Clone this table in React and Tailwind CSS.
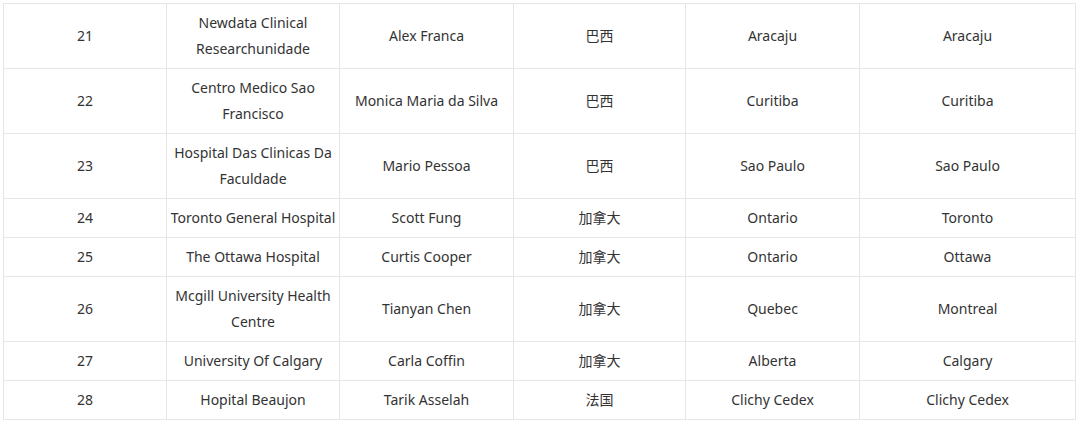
import React from "react";

const rows = [
  ["21", "Newdata Clinical Researchunidade", "Alex Franca", "巴西", "Aracaju", "Aracaju"],
  ["22", "Centro Medico Sao Francisco", "Monica Maria da Silva", "巴西", "Curitiba", "Curitiba"],
  ["23", "Hospital Das Clinicas Da Faculdade", "Mario Pessoa", "巴西", "Sao Paulo", "Sao Paulo"],
  ["24", "Toronto General Hospital", "Scott Fung", "加拿大", "Ontario", "Toronto"],
  ["25", "The Ottawa Hospital", "Curtis Cooper", "加拿大", "Ontario", "Ottawa"],
  ["26", "Mcgill University Health Centre", "Tianyan Chen", "加拿大", "Quebec", "Montreal"],
  ["27", "University Of Calgary", "Carla Coffin", "加拿大", "Alberta", "Calgary"],
  ["28", "Hopital Beaujon", "Tarik Asselah", "法国", "Clichy Cedex", "Clichy Cedex"],
];

const widths = ["w-[163px]", "w-[173px]", "w-[174px]", "w-[172px]", "w-[174px]", "w-[216px]"];

export default function App() {
  return (
    <div className="bg-white w-[1080px] h-[423px] pt-[3px] pl-[3px] font-['Noto_Sans','Noto_Sans_CJK_SC',sans-serif] text-[14px] text-[#333]">
      <table className="w-[1072px] table-fixed border-collapse">
        <colgroup>
          {widths.map((w, i) => (
            <col key={i} className={w} />
          ))}
        </colgroup>
        <tbody>
          {rows.map((r) => (
            <tr key={r[0]}>
              {r.map((c, i) => (
                <td
                  key={i}
                  className="border border-[#e6e6e6] px-[1px] py-[6px] text-center align-middle leading-[26px]"
                >
                  {c}
                </td>
              ))}
            </tr>
          ))}
        </tbody>
      </table>
    </div>
  );
}
